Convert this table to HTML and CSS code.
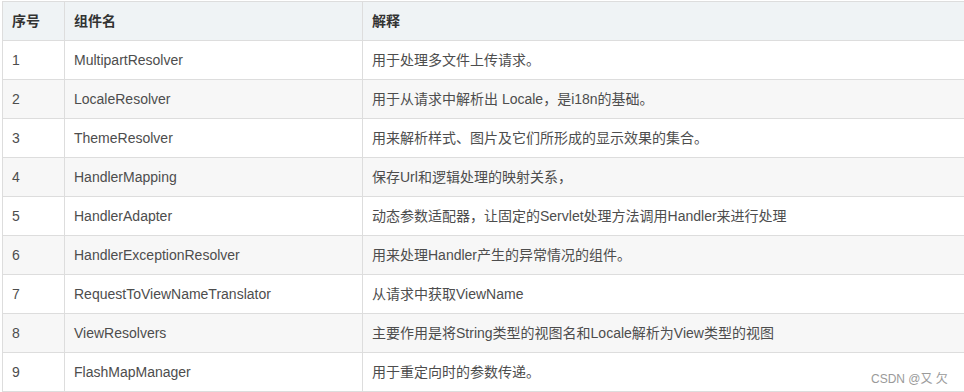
FILE: index.html
```html
<!DOCTYPE html>
<html>
<head>
<meta charset="utf-8">
<link rel="stylesheet" href="styles.css">
</head>
<body>
<div class="wrap">
<table class="tbl">
<colgroup><col class="c1"><col class="c2"><col class="c3"></colgroup>
<thead>
<tr><th>序号</th><th>组件名</th><th>解释</th></tr>
</thead>
<tbody>
<tr><td>1</td><td>MultipartResolver</td><td>用于处理多文件上传请求。</td></tr>
<tr><td>2</td><td>LocaleResolver</td><td>用于从请求中解析出 Locale，是i18n的基础。</td></tr>
<tr><td>3</td><td>ThemeResolver</td><td>用来解析样式、图片及它们所形成的显示效果的集合。</td></tr>
<tr><td>4</td><td>HandlerMapping</td><td>保存Url和逻辑处理的映射关系，</td></tr>
<tr><td>5</td><td>HandlerAdapter</td><td>动态参数适配器，让固定的Servlet处理方法调用Handler来进行处理</td></tr>
<tr><td>6</td><td>HandlerExceptionResolver</td><td>用来处理Handler产生的异常情况的组件。</td></tr>
<tr><td>7</td><td>RequestToViewNameTranslator</td><td>从请求中获取ViewName</td></tr>
<tr><td>8</td><td>ViewResolvers</td><td>主要作用是将String类型的视图名和Locale解析为View类型的视图</td></tr>
<tr><td>9</td><td>FlashMapManager</td><td>用于重定向时的参数传递。</td></tr>
</tbody>
</table>
<div class="mark">CSDN @又 欠</div>
</div>
</body>
</html>
```
FILE: styles.css
```css
html, body {
  margin: 0;
  padding: 0;
  background: #fff;
}
.wrap {
  position: relative;
  padding: 1px 0 0 2px;
  width: 964px;
  height: 392px;
  box-sizing: border-box;
  overflow: hidden;
}
.tbl {
  border-collapse: collapse;
  table-layout: fixed;
  width: 962px;
  font-family: "Liberation Sans", "Noto Sans CJK SC", sans-serif;
  font-size: 14px;
  color: #4d4d4d;
}
.c1 { width: 62px; }
.c2 { width: 298px; }
.c3 { width: 602px; }
.tbl th, .tbl td {
  border: 1px solid #dddddd;
  height: 39px;
  padding: 0 0 0 9px;
  text-align: left;
  vertical-align: middle;
  box-sizing: border-box;
  white-space: nowrap;
  line-height: 20px;
}
.tbl th {
  background: #eff3f5;
  color: #333;
  font-weight: bold;
}
.tbl tbody tr:nth-child(even) td {
  background: #f7f7f7;
}
.tbl tbody tr:nth-child(odd) td {
  background: #fff;
}
.mark {
  position: absolute;
  left: 871px;
  top: 369px;
  font-family: "Liberation Sans", "Noto Sans CJK SC", sans-serif;
  font-size: 12px;
  color: #9a9a9a;
  white-space: nowrap;
}
```
